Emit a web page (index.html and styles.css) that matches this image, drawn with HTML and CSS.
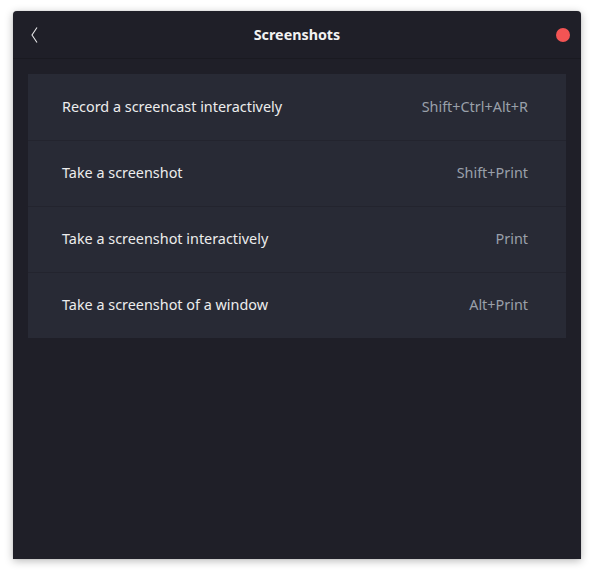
FILE: index.html
```html
<!DOCTYPE html>
<html>
<head>
<meta charset="utf-8">
<link rel="stylesheet" href="styles.css">
</head>
<body>
<div class="window">
  <div class="header">
    <button class="back" aria-label="Back">
      <svg width="10" height="18" viewBox="0 0 10 18"><polyline points="7,1.5 2,9 7,16.5" fill="none" stroke="#e8e8ea" stroke-width="1.1"/></svg>
    </button>
    <div class="title">Screenshots</div>
    <span class="close"></span>
  </div>
  <div class="content">
    <div class="list">
      <div class="row"><span class="label">Record a screencast interactively</span><span class="key">Shift+Ctrl+Alt+R</span></div>
      <div class="row"><span class="label">Take a screenshot</span><span class="key">Shift+Print</span></div>
      <div class="row"><span class="label">Take a screenshot interactively</span><span class="key">Print</span></div>
      <div class="row"><span class="label">Take a screenshot of a window</span><span class="key">Alt+Print</span></div>
    </div>
  </div>
</div>
</body>
</html>
```

FILE: styles.css
```css
html, body {
  margin: 0;
  padding: 0;
  background: #ffffff;
}
body {
  padding: 11px 13px 15px 13px;
  font-family: "Noto Sans", "DejaVu Sans", sans-serif;
}
.window {
  width: 568px;
  height: 548px;
  background: #1f1f28;
  border-radius: 4px 4px 0 0;
  box-shadow: 0 2px 8px rgba(0,0,0,0.28), 0 0 1px rgba(0,0,0,0.3);
  display: flex;
  flex-direction: column;
  overflow: hidden;
}
.header {
  height: 47px;
  border-bottom: 1px solid #1a1a21;
  display: grid;
  grid-template-columns: 1fr auto 1fr;
  align-items: center;
  padding: 0 11px 0 17px;
}
.back {
  background: none;
  border: 0;
  padding: 0;
  width: 10px;
  height: 18px;
  display: flex;
  justify-self: start;
}
.title {
  color: #f2f2f2;
  font-weight: bold;
  font-size: 14.3px;
  margin-left: -6px;
}
.close {
  width: 14px;
  height: 14px;
  border-radius: 50%;
  background: #f35454;
  justify-self: end;
}
.content {
  padding: 15px;
}
.list {
  background: #282a35;
  display: flex;
  flex-direction: column;
}
.row {
  box-sizing: border-box;
  display: flex;
  align-items: center;
  justify-content: space-between;
  padding: 0 38px 2px 34px;
  border-top: 1px solid #23242e;
  height: 66px;
}
.row:first-child {
  border-top: 0;
}
.label {
  color: #ededed;
  font-size: 14.4px;
}
.key {
  color: #9aa0aa;
  font-size: 14.4px;
}
```
